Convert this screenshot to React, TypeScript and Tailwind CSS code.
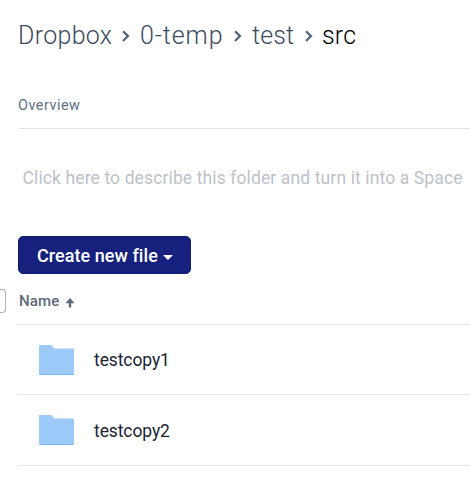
import React from "react";

function Chevron() {
  return (
    <svg className="shrink-0" width="8" height="12" viewBox="0 0 8 12" fill="none" stroke="#52637a" strokeWidth="2.2">
      <path d="M1 1.2 6 6.1 1 11" />
    </svg>
  );
}

function Folder() {
  return (
    <svg className="shrink-0" width="36" height="30" viewBox="0 0 36 30">
      <path d="M2.3 0H12.5q.9 0 1.4.8l1.3 2q.6.9 1.6.9H34.7q1.3 0 1.3 1.3V28.7q0 1.3-1.3 1.3H2.3Q1 30 1 28.7V1.3Q1 0 2.3 0Z" fill="#77b4f5" />
      <path d="M2.3 0H12.5q.9 0 1.4.8l1.3 2q.6.9 1.6.9H34.7q1.3 0 1.3 1.3V27.6q0 1.3-1.3 1.3H2.3Q1 28.9 1 27.6V1.3Q1 0 2.3 0Z" fill="#9dcbf9" />
    </svg>
  );
}

function FileRow({ name, className }: { name: string; className: string }) {
  return (
    <div className={`ml-[18px] flex items-center border-b border-[#e3e5e9] pl-5 ${className}`}>
      <Folder />
      <span className="ml-5 pt-px text-[17.5px] leading-6 tracking-[-0.1px] text-[#1b2533]">{name}</span>
    </div>
  );
}

export default function App() {
  return (
    <div className="h-[498px] w-[470px] overflow-hidden bg-white font-['Roboto','Liberation_Sans',sans-serif] whitespace-nowrap">
      <nav className="flex h-[70px] items-center pt-px pl-[18px] text-[25px] leading-8 font-light text-[#3a4a60]">
        <span className="w-[104px] tracking-[0.3px]">Dropbox</span>
        <Chevron />
        <span className="ml-[10px] w-[94px] tracking-[0.9px]">0-temp</span>
        <Chevron />
        <span className="ml-[10px] w-[53px] tracking-[0.1px]">test</span>
        <Chevron />
        <span className="ml-[9px] tracking-[0.2px] text-black">src</span>
      </nav>

      <div className="ml-[18px] flex h-[59px] items-end border-b border-[#e3e5e9] pb-[12px]">
        <span className="text-[14.5px] leading-5 tracking-[0.45px] text-[#607085]">Overview</span>
      </div>

      <p className="mt-[37px] ml-[22.5px] text-[17.5px] leading-6 tracking-[0.12px] text-[#bcc2ca]">
        Click here to describe this folder and turn it into a Space
      </p>

      <button className="mt-[46px] ml-[18px] flex h-[38px] w-[173px] items-center rounded-[5px] border border-[#101c70] bg-[#15217c] pt-px pl-[18px] text-[18px] leading-6 font-medium text-white">
        <span className="tracking-[0.05px]">Create new file</span>
        <svg className="mt-[3px] ml-[5px]" width="10" height="5" viewBox="0 0 10 5" fill="white">
          <path d="M0 0H10L5.6 4.4q-.6.6-1.2 0Z" />
        </svg>
      </button>

      <div className="flex h-[51px] items-center">
        <span className="mt-[3px] h-6 w-[6px] rounded-r-[4px] border border-l-0 border-[#a9afb9]" />
        <div className="ml-3 flex h-full flex-1 items-center border-b border-[#e3e5e9] pt-1 text-[15px] leading-5 font-medium text-[#5a697c]">
          <span className="ml-px tracking-[0.15px]">Name</span>
          <svg className="mt-[3px] ml-[7px]" width="8" height="10" viewBox="0 0 8 10" fill="#5a697c">
            <path d="M4 0 .1 4.2.1 5.2H2.8V9.5H5.2V5.2H7.9V4.2Z" />
          </svg>
        </div>
      </div>

      <FileRow name="testcopy1" className="h-[70px]" />
      <FileRow name="testcopy2" className="h-[71px]" />
    </div>
  );
}
